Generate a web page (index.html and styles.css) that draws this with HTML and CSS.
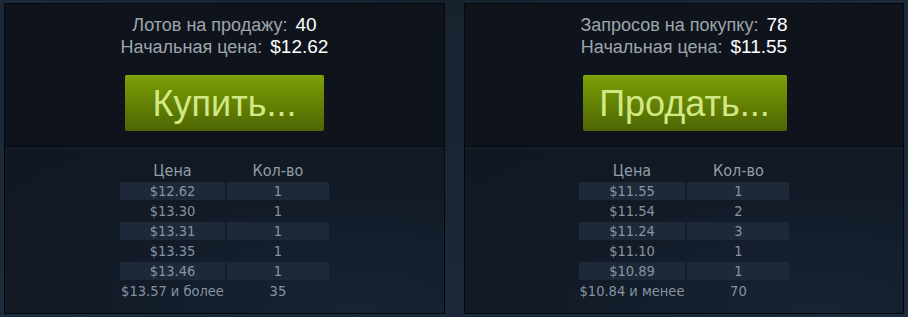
FILE: index.html
```html
<!DOCTYPE html>
<html lang="ru">
<head>
<meta charset="utf-8">
<title>Market orders</title>
<link rel="stylesheet" href="styles.css">
</head>
<body>
<div class="orders">
  <section class="panel">
    <div class="summary">
      <div class="line"><span class="label">Лотов на продажу:</span><span class="value">40</span></div>
      <div class="line"><span class="label">Начальная цена:</span><span class="value">$12.62</span></div>
      <a class="btn-green buy">Купить...</a>
    </div>
    <div class="book">
      <table class="orders-table">
        <tr><th>Цена</th><th class="qty">Кол-во</th></tr>
        <tr class="alt"><td>$12.62</td><td>1</td></tr>
        <tr><td>$13.30</td><td>1</td></tr>
        <tr class="alt"><td>$13.31</td><td>1</td></tr>
        <tr><td>$13.35</td><td>1</td></tr>
        <tr class="alt"><td>$13.46</td><td>1</td></tr>
        <tr><td>$13.57 и более</td><td>35</td></tr>
      </table>
    </div>
  </section>
  <section class="panel">
    <div class="summary">
      <div class="line"><span class="label">Запросов на покупку:</span><span class="value">78</span></div>
      <div class="line"><span class="label">Начальная цена:</span><span class="value">$11.55</span></div>
      <a class="btn-green sell">Продать...</a>
    </div>
    <div class="book">
      <table class="orders-table">
        <tr><th>Цена</th><th class="qty">Кол-во</th></tr>
        <tr class="alt"><td>$11.55</td><td>1</td></tr>
        <tr><td>$11.54</td><td>2</td></tr>
        <tr class="alt"><td>$11.24</td><td>3</td></tr>
        <tr><td>$11.10</td><td>1</td></tr>
        <tr class="alt"><td>$10.89</td><td>1</td></tr>
        <tr><td>$10.84 и менее</td><td>70</td></tr>
      </table>
    </div>
  </section>
</div>
</body>
</html>
```
FILE: styles.css
```css
html, body {
  margin: 0;
  padding: 0;
  height: 100%;
}
body {
  background: radial-gradient(ellipse at 50% 0%, #18222f 0%, #1b2838 70%, #1c2c3e 100%);
  font-family: "Liberation Sans", Arial, sans-serif;
  overflow: hidden;
}
.orders {
  display: grid;
  grid-template-columns: 441px 440px;
  column-gap: 19px;
  padding: 3px 5px 0 4px;
}
.panel {
  border: 1px solid #05080b;
  display: flex;
  flex-direction: column;
  height: 311px;
  box-sizing: border-box;
}
.summary {
  background: #0f141c;
  display: flex;
  flex-direction: column;
  align-items: center;
  padding-top: 10px;
  height: 143px;
  box-sizing: border-box;
  border-bottom: 1px solid #05080b;
}
.line {
  font-size: 18px;
  line-height: 22px;
  white-space: nowrap;
}
.label {
  color: #9ea5ad;
  margin-right: 8px;
}
.value {
  color: #ffffff;
  font-size: 19px;
}
.btn-green {
  margin-top: 17px;
  height: 56px;
  box-sizing: border-box;
  display: flex;
  align-items: center;
  justify-content: center;
  border-radius: 2px;
  background: linear-gradient(to bottom, #799d05 5%, #506803 95%);
  box-shadow: inset 0 1px 0 rgba(170, 210, 40, 0.3);
  color: #d2e885;
  font-size: 36px;
  padding-top: 2px;
  text-decoration: none;
}
.buy { width: 199px; }
.sell { width: 204px; margin-left: 1px; }
.book {
  flex: 1;
  background: radial-gradient(ellipse at 80% 100%, #172334 0%, #121a26 55%, #111823 100%);
  border-top: 1px solid #172230;
  display: flex;
  justify-content: center;
  padding-top: 12px;
}
.orders-table {
  border-spacing: 2px;
  align-self: flex-start;
  font-family: "DejaVu Sans Condensed", "DejaVu Sans", sans-serif;
  font-stretch: condensed;
  font-size: 14.5px;
  color: #8893a0;
}
.orders-table th {
  font-weight: normal;
  color: #949ea8;
  font-size: 16px;
  height: 18px;
  line-height: 18px;
  padding: 0 1px;
}
.orders-table td {
  height: 18px;
  line-height: 18px;
  padding: 0 1px;
  text-align: center;
  white-space: nowrap;
}
.orders-table .qty {
  width: 100px;
}
.orders-table tr.alt td {
  background: #1d2938;
}
```
